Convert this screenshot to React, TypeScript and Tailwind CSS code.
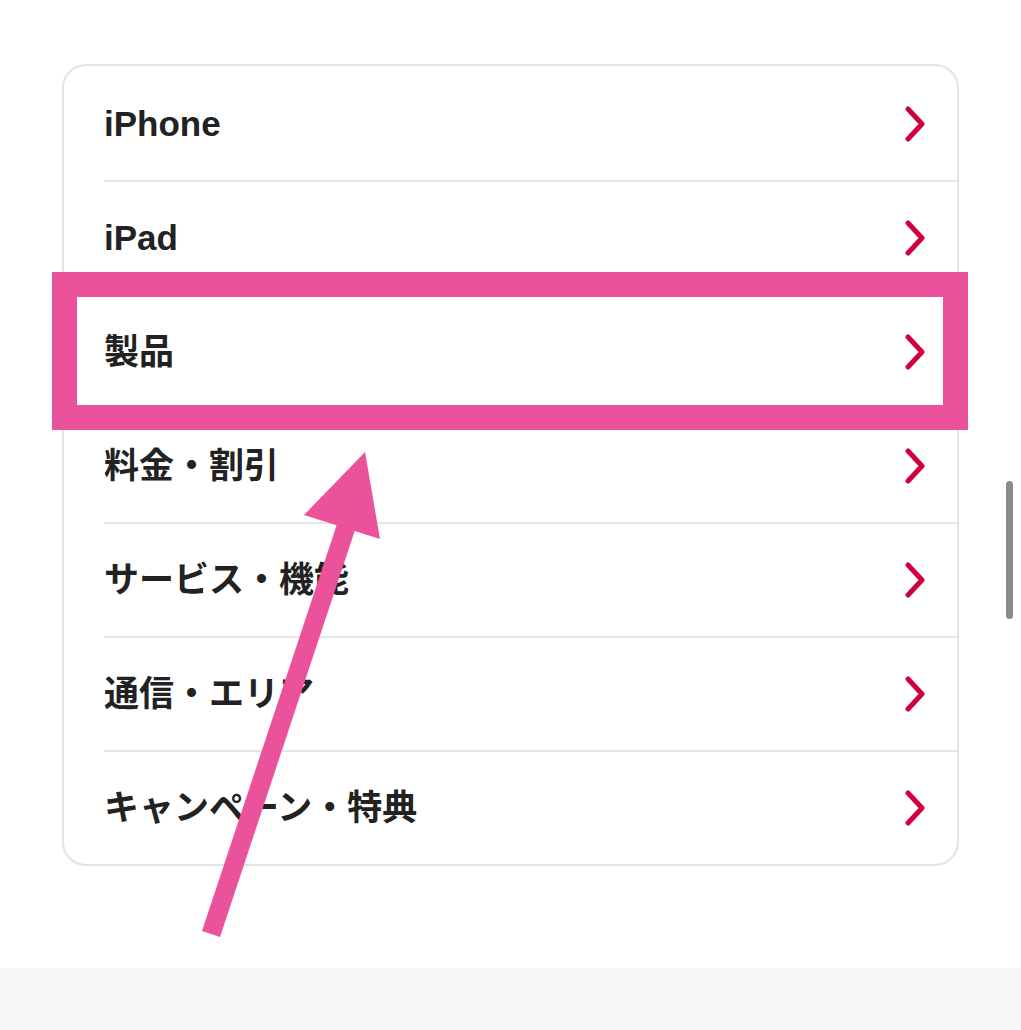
import React from "react";

const items = [
  "iPhone",
  "iPad",
  "製品",
  "料金・割引",
  "サービス・機能",
  "通信・エリア",
  "キャンペーン・特典",
];

const Chevron = () => (
  <svg width="22" height="36" viewBox="0 0 22 36" fill="none">
    <path
      d="M4 3 L18 18 L4 33"
      stroke="#d1003b"
      strokeWidth="5"
      strokeLinecap="round"
      strokeLinejoin="round"
    />
  </svg>
);

const App = () => {
  return (
    <div
      className="relative w-[1021px] h-[1030px] overflow-hidden bg-white"
      style={{ fontFamily: '"Liberation Sans", "Noto Sans CJK JP", sans-serif' }}
    >
      <div className="pt-[64px] pl-[62px]">
        <div className="w-[897px] rounded-[24px] border-2 border-[#e3e3e3] bg-white pt-[2px] overflow-hidden">
          {items.map((label, i) => (
            <div key={label} className="ml-[40px]">
              <div
                className={
                  "flex items-center justify-between pr-[31px] " +
                  (i < items.length - 1 ? "h-[114px] border-b-2 border-[#e6e6e6]" : "h-[112px]")
                }
              >
                <span className="text-[35px] font-bold text-[#222222]">
                  {label}
                </span>
                <Chevron />
              </div>
            </div>
          ))}
        </div>
      </div>

      <div className="mt-[102px] h-[62px] bg-[#f7f7f7]" />

      {/* highlight box */}
      <div className="absolute left-[52px] top-[272px] w-[916px] h-[158px] border-[25px] border-[#ea539b]" />

      {/* arrow */}
      <svg className="absolute left-0 top-0" width="1021" height="1030">
        <line x1="211" y1="934" x2="350" y2="515" stroke="#ea539b" strokeWidth="19" />
        <polygon points="365,452 304,515 380,539" fill="#ea539b" />
      </svg>

      {/* scrollbar */}
      <div className="absolute left-[1006px] top-[481px] w-[7px] h-[138px] rounded-full bg-[#8a8a8a]" />
    </div>
  );
};

export default App;
